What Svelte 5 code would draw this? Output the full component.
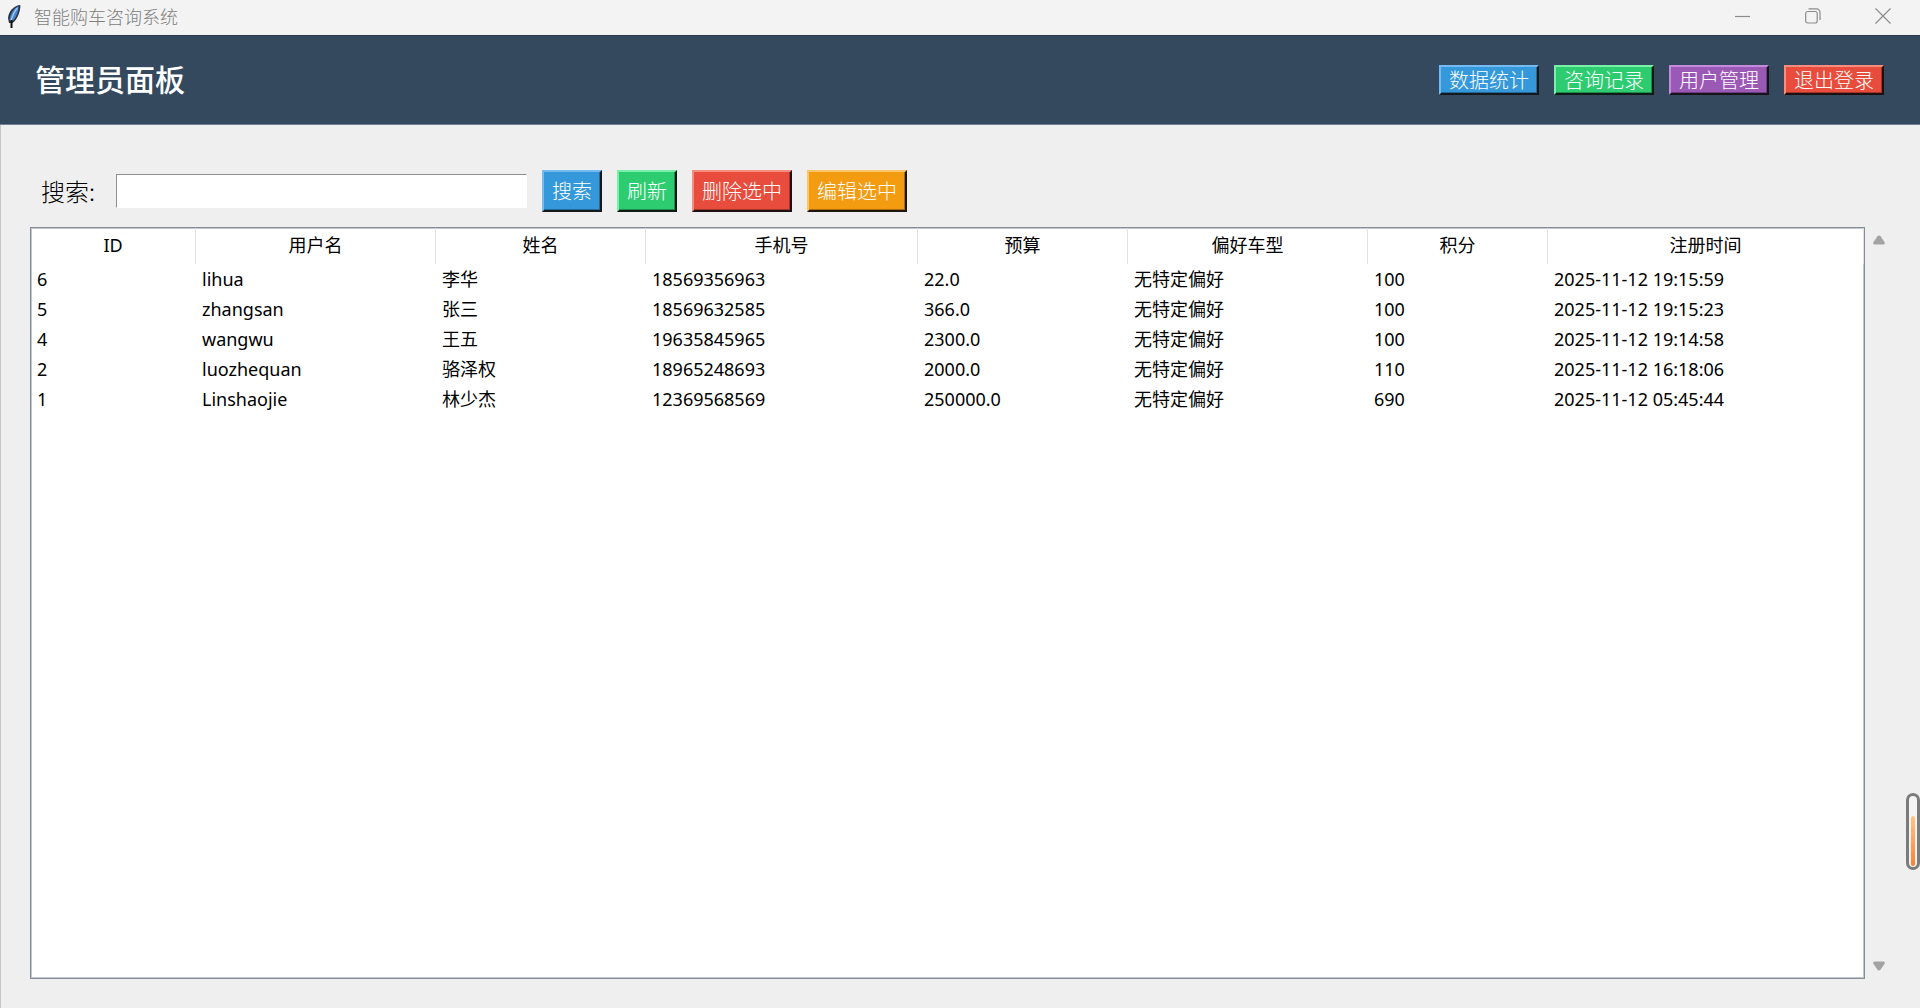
<script>
  let keyword = ''
  let query = ''
  let selectedId = null

  const navButtons = [
    { label: '数据统计', color: 'blue' },
    { label: '咨询记录', color: 'green' },
    { label: '用户管理', color: 'purple' },
    { label: '退出登录', color: 'red' }
  ]

  // width is a share of the whole table
  const columns = [
    { key: 'id', title: 'ID', width: 165 },
    { key: 'username', title: '用户名', width: 240 },
    { key: 'name', title: '姓名', width: 210 },
    { key: 'phone', title: '手机号', width: 272 },
    { key: 'budget', title: '预算', width: 210 },
    { key: 'carType', title: '偏好车型', width: 240 },
    { key: 'points', title: '积分', width: 180 },
    { key: 'created', title: '注册时间', width: 316 }
  ]
  const totalWidth = columns.reduce((sum, c) => sum + c.width, 0)

  let users = [
    { id: 6, username: 'lihua', name: '李华', phone: '18569356963', budget: '22.0', carType: '无特定偏好', points: 100, created: '2025-11-12 19:15:59' },
    { id: 5, username: 'zhangsan', name: '张三', phone: '18569632585', budget: '366.0', carType: '无特定偏好', points: 100, created: '2025-11-12 19:15:23' },
    { id: 4, username: 'wangwu', name: '王五', phone: '19635845965', budget: '2300.0', carType: '无特定偏好', points: 100, created: '2025-11-12 19:14:58' },
    { id: 2, username: 'luozhequan', name: '骆泽权', phone: '18965248693', budget: '2000.0', carType: '无特定偏好', points: 110, created: '2025-11-12 16:18:06' },
    { id: 1, username: 'Linshaojie', name: '林少杰', phone: '12369568569', budget: '250000.0', carType: '无特定偏好', points: 690, created: '2025-11-12 05:45:44' }
  ]

  $: visibleUsers = users.filter(u =>
    !query || u.username.includes(query) || u.name.includes(query) || u.phone.includes(query)
  )

  function search() {
    query = keyword.trim()
  }

  function refresh() {
    keyword = ''
    query = ''
    selectedId = null
  }

  function deleteSelected() {
    users = users.filter(u => u.id !== selectedId)
    selectedId = null
  }
</script>

<div class="window">
  <div class="titlebar">
    <svg class="feather" width="16" height="26" viewBox="0 0 16 26" aria-hidden="true">
      <path d="M13.5 1 C8 2 2.5 7 2 14 L3 19 L6.5 19 C11 16 14 9 14.5 1.5 Z" fill="#2a3440" />
      <path d="M12.5 2 C8 4 4.5 9 3.5 16 L6 17.5 C10 14 12.5 8 12.5 2 Z" fill="#4a86d4" />
      <path d="M11.5 4 C8.5 7 6.5 11 5 17" stroke="#a9cdf5" stroke-width="1.2" fill="none" />
      <path d="M5.5 16 L5.5 24" stroke="#111" stroke-width="2" fill="none" />
    </svg>
    <span class="app-name">智能购车咨询系统</span>
    <div class="controls">
      <button type="button" aria-label="最小化">
        <svg width="16" height="16" viewBox="0 0 16 16"><path d="M0 8.5H15" /></svg>
      </button>
      <button type="button" aria-label="还原">
        <svg width="16" height="16" viewBox="0 0 16 16">
          <rect x="0.7" y="3.5" width="11.5" height="11.5" rx="2" />
          <path d="M3.5 0.8H11.5A3.5 3.5 0 0 1 15 4.3V12" />
        </svg>
      </button>
      <button type="button" aria-label="关闭">
        <svg width="16" height="16" viewBox="0 0 16 16"><path d="M0.5 0.5L15.5 15.5M15.5 0.5L0.5 15.5" /></svg>
      </button>
    </div>
  </div>

  <header>
    <h1>管理员面板</h1>
    <nav>
      {#each navButtons as item}
        <button type="button" class="btn {item.color}">{item.label}</button>
      {/each}
    </nav>
  </header>

  <main>
    <form class="toolbar" on:submit|preventDefault={search}>
      <label for="keyword">搜索:</label>
      <input id="keyword" type="text" bind:value={keyword} />
      <button type="submit" class="btn tall blue">搜索</button>
      <button type="button" class="btn tall green" on:click={refresh}>刷新</button>
      <button type="button" class="btn tall red" on:click={deleteSelected}>删除选中</button>
      <button type="button" class="btn tall orange">编辑选中</button>
    </form>

    <div class="list">
      <div class="table-box">
        <table>
          <colgroup>
            {#each columns as col}
              <col style="width: {(col.width / totalWidth) * 100}%" />
            {/each}
          </colgroup>
          <thead>
            <tr>
              {#each columns as col}
                <th scope="col">{col.title}</th>
              {/each}
            </tr>
          </thead>
          <tbody>
            {#each visibleUsers as user (user.id)}
              <tr class:selected={user.id === selectedId} on:click={() => selectedId = user.id}>
                {#each columns as col}
                  <td>{user[col.key]}</td>
                {/each}
              </tr>
            {/each}
          </tbody>
        </table>
      </div>
      <div class="scrollbar">
        <button type="button" aria-label="向上滚动">
          <svg width="14" height="10" viewBox="0 0 14 10"><path d="M5.5 1.2Q7 -0.4 8.5 1.2L12.6 7.2Q13.4 9.5 11.5 9.5H2.5Q0.6 9.5 1.4 7.2Z" /></svg>
        </button>
        <button type="button" aria-label="向下滚动">
          <svg width="14" height="10" viewBox="0 0 14 10"><path d="M5.5 8.8Q7 10.4 8.5 8.8L12.6 2.8Q13.4 0.5 11.5 0.5H2.5Q0.6 0.5 1.4 2.8Z" /></svg>
        </button>
      </div>
    </div>
  </main>

  <!-- floating gauge docked to the right edge -->
  <div class="gauge"><div class="level"></div></div>
</div>

<style>
  :global(body) {
    margin: 0;
    background: #efefef;
  }

  .window {
    position: relative;
    display: flex;
    flex-direction: column;
    min-height: 100vh;
    overflow: hidden;
    font-family: 'Noto Sans', 'Noto Sans CJK SC', sans-serif;
    color: #000;
  }

  button {
    font-family: inherit;
    cursor: pointer;
  }

  .titlebar {
    display: flex;
    align-items: flex-start;
    height: 35px;
    padding: 0 2px 0 6px;
    background: #f3f3f3;
  }

  .feather {
    margin: 4px 12px 0 0;
  }

  .app-name {
    flex: 1;
    font-family: 'Noto Sans CJK SC', sans-serif;
    font-weight: 300;
    font-size: 18px;
    line-height: 32px;
    color: #808080;
  }

  .controls {
    display: flex;
  }

  .controls button {
    display: flex;
    align-items: center;
    justify-content: center;
    width: 70px;
    height: 32px;
    padding: 0;
    border: none;
    background: none;
  }

  .controls svg {
    fill: none;
    stroke: #8c8c8c;
    stroke-width: 1.2;
  }

  header {
    display: flex;
    align-items: center;
    justify-content: space-between;
    box-sizing: border-box;
    height: 90px;
    padding: 0 36px 0 35px;
    background: #34495e;
    border-top: 1px solid #2b3b4b;
    border-bottom: 1px solid #71808e;
  }

  h1 {
    margin: 0;
    font-size: 30px;
    font-weight: 500;
    line-height: 40px;
    color: #fff;
  }

  nav {
    display: flex;
    gap: 15px;
  }

  .btn {
    padding: 0 8px;
    border: 2px solid;
    font-family: 'Noto Sans CJK SC', sans-serif;
    font-size: 20px;
    font-weight: 300;
    line-height: 26px;
    white-space: nowrap;
    color: #fff;
  }

  .btn.tall {
    line-height: 38px;
  }

  .blue {
    background: #3498db;
    border-color: #75baf0 #15191d #15191d #75baf0;
    box-shadow: inset -1px -1px #236a9a;
  }

  .green {
    background: #2ecc71;
    border-color: #79efa8 #101a14 #101a14 #79efa8;
    box-shadow: inset -1px -1px #1f8c4d;
  }

  .purple {
    background: #9b59b6;
    border-color: #c48ade #18121b #18121b #c48ade;
    box-shadow: inset -1px -1px #6c3e80;
  }

  .red {
    background: #e74c3c;
    border-color: #f78c80 #1c1110 #1c1110 #f78c80;
    box-shadow: inset -1px -1px #a2352a;
  }

  .orange {
    background: #f39c12;
    border-color: #fcc565 #1c160c #1c160c #fcc565;
    box-shadow: inset -1px -1px #aa6d0d;
  }

  main {
    flex: 1;
    display: flex;
    flex-direction: column;
    padding: 45px 30px 29px 29px;
    border-left: 1px solid #c6c6c6;
    background: #efefef;
  }

  .toolbar {
    display: flex;
    align-items: center;
    gap: 15px;
    padding: 0 11px;
    margin-bottom: 15px;
  }

  .toolbar label {
    width: 60px;
    font-family: 'Noto Sans CJK SC', sans-serif;
    font-size: 24px;
    font-weight: 300;
    line-height: 36px;
  }

  .toolbar input {
    box-sizing: border-box;
    width: 411px;
    height: 34px;
    padding: 0 4px;
    border: 1px solid;
    border-color: #8f8f8f #fff #fff #8f8f8f;
    border-radius: 0;
    outline: none;
    background: #fff;
    font-family: inherit;
    font-size: 20px;
  }

  .list {
    flex: 1;
    display: flex;
  }

  .table-box {
    flex: 1;
    border: 1px solid #868c97;
    box-shadow: inset 0 0 0 1px #c3c7cd;
    background: #fff;
  }

  table {
    width: 100%;
    table-layout: fixed;
    border-collapse: separate;
    border-spacing: 0;
    font-size: 18px;
  }

  th {
    height: 36px;
    padding: 0 0 2px;
    box-sizing: border-box;
    border-right: 1px solid #e2e2e2;
    font-weight: 400;
    line-height: 24px;
    text-align: center;
  }

  td {
    height: 30px;
    padding: 0 6px;
    line-height: 24px;
    white-space: nowrap;
  }

  tr.selected td {
    background: #0078d7;
    color: #fff;
  }

  .scrollbar {
    display: flex;
    flex-direction: column;
    justify-content: space-between;
    width: 25px;
  }

  .scrollbar button {
    display: flex;
    align-items: center;
    justify-content: center;
    height: 26px;
    padding: 0 0 0 2px;
    border: none;
    background: none;
  }

  .scrollbar svg {
    fill: #a3a3a3;
  }

  .gauge {
    position: absolute;
    right: 0;
    bottom: 138px;
    display: flex;
    align-items: flex-end;
    box-sizing: border-box;
    width: 14px;
    height: 77px;
    padding: 1px 2px;
    border: 3px solid #7b7b7b;
    border-radius: 7px;
    background: #f4f4f4;
  }

  .level {
    width: 4px;
    height: 50px;
    border-radius: 2px;
    background: linear-gradient(#ffc48a, #ff7f32);
  }
</style>
